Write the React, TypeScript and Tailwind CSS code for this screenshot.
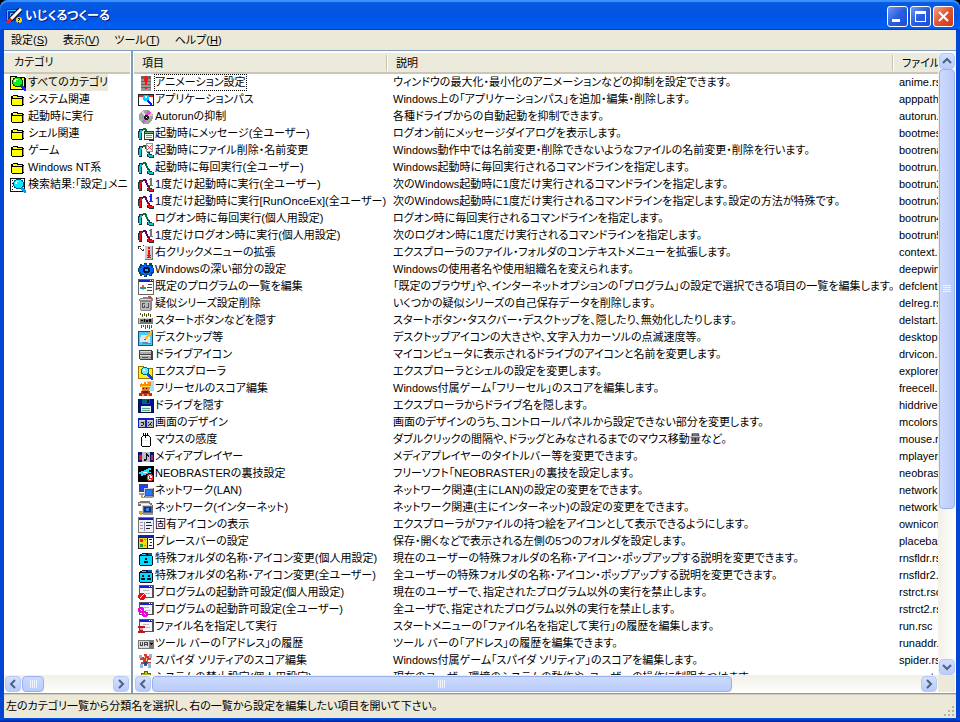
import type { ReactNode } from "react";

function Icon({ children }: { children: ReactNode }) {
  return (
    <svg
      width="16"
      height="16"
      viewBox="0 0 16 16"
      shapeRendering="crispEdges"
      aria-hidden="true"
      className="shrink-0"
    >
      {children}
    </svg>
  );
}

const folder = (
  <Icon>
    <path d="M3 3h5v1h5v1h1v8h-1v1H2v-1H1V4h2z" fill="#000" />
    <path d="M3 4h4v1h5v1H3zM2 7h10v6H2z" fill="#ff0" />
    <path d="M13 6h1v6h-1z" fill="#aa0" />
  </Icon>
);

const folderSearch = (
  <Icon>
    <path d="M0 1h7v1h8v1h1v12H0z" fill="#000" />
    <path d="M1 2h5v1h8v11H1z" fill="#ff0" />
    <path d="M5 2h5v1h2v2h1v5h-2v2H5v-1H3V9H2V5h1V3h2z" fill="#040" />
    <path d="M5 3h5v1h1v1h1v4h-1v1h-1v1H5v-1H4V9H3V5h1V4h1z" fill="#1e2" />
    <path d="M5 4h3v1H6v2H4V5h1z" fill="#fff" />
    <path d="M11 10h2v1h1v1h1v1h1v3h-2v-1h-1v-1h-1v-1h-1z" fill="#22f" />
  </Icon>
);

const resultSearch = (
  <Icon>
    <path d="M0 1h15v14H0z" fill="#111" />
    <path d="M1 2h13v12H1z" fill="#fff" />
    <path d="M2 3h1v1H2zM2 6h1v1H2zM2 9h1v1H2zM2 12h1v1H2z" fill="#000" />
    <path d="M6 2h5v1h2v2h1v5h-2v2H6v-1H4V9H3V5h1V3h2z" fill="#058" />
    <path d="M6 3h5v1h1v1h1v4h-1v1h-1v1H6v-1H5V9H4V5h1V4h1z" fill="#0ef" />
    <path d="M6 4h3v1H7v2H5V5h1z" fill="#fff" />
    <path d="M11 10h2v1h1v1h1v1h1v3h-2v-1h-1v-1h-1v-1h-1z" fill="#09f" />
  </Icon>
);

const animation = (
  <Icon>
    <path d="M3 1h10v15H3z" fill="#999" />
    <path d="M3 1h10v3H3zM3 6h10v1H3zM3 9h10v1H3zM3 12h10v1H3z" fill="#666" />
    <path d="M7 1h2v9H7zM6 3h1v3H6zM9 3h1v3H9zM7 12h2v2H7z" fill="#f11" />
  </Icon>
);

const appPath = (
  <Icon>
    <path d="M0 2h16v12H0z" fill="#222" />
    <path d="M1 3h14v2H1z" fill="#e22" />
    <path d="M1 5h14v8H1z" fill="#fff" />
    <path d="M6 3h4v1h1v4H9v1H6V8H5V4h1z" fill="#0cf" />
    <path d="M7 4h2v2H7z" fill="#dff" />
    <path d="M9 8h2v1h1v1h1v1h1v2h-2v-1h-1v-1h-1v-1H9z" fill="#12e" />
  </Icon>
);

const disc = (
  <Icon>
    <circle cx="8" cy="8" r="7" fill="#a4a4a4" />
    <path d="M8 8L9 1l4 2z" fill="#e4e" />
    <path d="M8 9L3 13l3 2z" fill="#e4e" />
    <path d="M8 8l6-4 1 3z" fill="#dd6" />
    <path d="M8 9l-6 1 1 3z" fill="#7c7" />
    <path d="M8 8L3 4l3-2z" fill="#ddd" />
    <path d="M7 6h3v1h1v3h-1v1H7v-1H6V7h1z" fill="#222" />
    <path d="M8 8h1v1H8z" fill="#fff" />
  </Icon>
);

// running figure shared by the "boot" entries
function Boot({ color, arm, children }: { color: string; arm: string; children?: ReactNode }) {
  return (
    <Icon>
      <path d="M1 3h4v2H4v9H1v-2H0V5h1z" fill="#134" />
      <path d="M2 4h2v3H3v6H1V6h1z" fill={color} />
      <path d="M5 2h3v1h1v3h1v2h1v2H9V8H8V6H7V4H5z" fill={arm} />
      <path d="M10 9h2v2h2v1h2v3h-5v-1H9v-3h1z" fill="#134" />
      <path d="M10 10h1v2h4v2h-4v-1h-1z" fill={color} />
      {children}
    </Icon>
  );
}

const boot = <Boot color="#0cc" arm="#073" />;
const bootOnce = (
  <Boot color="#e11" arm="#606">
    <path d="M12 1h2v7h1v1h-4V8h1V3h-1V2h1z" fill="#777" />
  </Boot>
);
const bootOnceEx = (
  <Boot color="#e11" arm="#606">
    <path d="M12 0h2v7h1v1h-4V7h1V3h-1V2h1z" fill="#22f" />
  </Boot>
);
const bootMessage = (
  <Boot color="#0cc" arm="#073">
    <path d="M6 5h10v9H6z" fill="#242" />
    <path d="M7 6h8v1H7z" fill="#6b6" />
    <path d="M7 8h8v5H7z" fill="#fff" />
    <path d="M8 9h6v1H8zM8 11h6v1H8z" fill="#797" />
  </Boot>
);
const bootRename = (
  <Boot color="#0cc" arm="#073">
    <path d="M8 0h7v9H8z" fill="#999" />
    <path d="M9 1h5v7H9z" fill="#fff" />
    <path d="M9 2h1v1h1v1h1V3h1V2h1v1h-1v1h-1v1h1v1h1v1h-1V6h-1V5h-1v1h-1v1H9V6h1V5h1V4h-1V3H9z" fill="#e44" />
  </Boot>
);

const contextMenu = (
  <Icon>
    <path d="M0 1h3v1H1v2H0zM2 3h1v1h1v1H3V4H2zM5 0h1v1H5zM5 4h1v2H4V5h1z" fill="#333" />
    <path d="M7 1h8v14H7z" fill="#c8c8c8" />
    <path d="M14 1h1v14H7v-1h7z" fill="#777" />
    <path d="M10 2h2v2h-2zM10 5h2v5h1v1h-1v1h1v1H9v-1h1v-1H9v-1h1z" fill="#e11" />
  </Icon>
);

const gear = (
  <Icon>
    <path d="M6 1h3v2h2V1h3v2h1v3h1v5h-1v1h-1v2h-3v-1H9v2H6v-2H4v1H2v-2H1v-2H0V6h1V4h1V2h2v1h2z" fill="#046" />
    <path d="M6 2h2v2h5v2h2v4h-2v3h-3v-1H8v2H6v-2H3v-2H1V6h2V4h3z" fill="#06f" />
    <path d="M6 5h5v1h1v4h-1v1H6v-1H5V6h1z" fill="#013" />
    <path d="M7 7h3v2H7z" fill="#2af" />
  </Icon>
);

const defaultPrograms = (
  <Icon>
    <path d="M0 0h16v16H0z" fill="#666" />
    <path d="M1 3h14v12H1z" fill="#fff" />
    <path d="M1 1h14v2H1z" fill="#12c" />
    <path d="M12 1h1v1h-1zM14 1h1v1h-1z" fill="#fff" />
    <path d="M10 5h4v1h-4zM9 8h5v1H9zM9 11h5v1H9z" fill="#444" />
    <path d="M4 6h2v2H4z" fill="#e62" />
    <path d="M2 8h3v2H2z" fill="#28c" />
    <path d="M5 8h3v2H5z" fill="#2a2" />
    <path d="M4 10h2v1H4z" fill="#dc2" />
  </Icon>
);

const trash = (
  <Icon>
    <path d="M2 2h3V1h7v1h3v3h-1v9h-1v1H3v-1H2V5H1V3h1z" fill="#888" />
    <path d="M2 3h11v1H2z" fill="#ddd" />
    <path d="M3 6h9v8H3z" fill="#bbb" />
    <path d="M4 7h3v1H5v3h1V9h1v3H4zM10 7h1v5H8v-1h2z" fill="#555" />
    <path d="M10 0h3v1h1v2h-3V2h-1z" fill="#b55" />
  </Icon>
);

const hideStart = (
  <Icon>
    <path d="M0 5h15v6H0z" fill="#777" />
    <path d="M1 5h13v1H1zM1 6h1v4H1z" fill="#ccc" />
    <path d="M3 7h2v1H3zM6 6h1v3H6zM8 7h2v2H8zM11 6h2v3h-2z" fill="#000" />
    <path d="M2 0h1v2H2zM4 1h1v3H4zM6 0h1v3H6zM8 1h1v3H8zM10 0h1v3h-1zM12 1h1v3h-1zM3 12h1v3H3zM5 12h1v2H5zM7 12h1v4H7zM9 12h1v3H9zM11 12h1v4h-1zM13 12h1v3h-1z" fill="#551" />
  </Icon>
);

const desktop = (
  <Icon>
    <path d="M0 1h15v15H0z" fill="#157" />
    <path d="M1 2h13v13H1z" fill="#4cf" />
    <path d="M3 5h7v1h2v7H4v-1H2V7h1z" fill="#dde8f0" />
    <path d="M4 12h6v1h3v1H5v-1H4z" fill="#68a" />
    <path d="M12 1h2v2h-1v2h-1v1h-1v1h-1v1H9v1H7V7h1V6h1V5h1V4h1V3h1z" fill="#fb2" />
    <path d="M13 0h2v2h-1V1h-1zM6 9h2v1H6z" fill="#b42" />
  </Icon>
);

const drive = (
  <Icon>
    <path d="M1 3h13v1h1v9H2v-1H1z" fill="#444" />
    <path d="M2 4h11v3H2zM2 8h11v4H2z" fill="#aaa" />
    <path d="M2 4h11v1H2zM2 8h11v1H2z" fill="#ddd" />
    <path d="M4 10h6v1H4z" fill="#555" />
    <path d="M12 10h1v1h-1z" fill="#2c2" />
  </Icon>
);

const explorer = (
  <Icon>
    <path d="M0 2h6v2h9v11H0z" fill="#970" />
    <path d="M1 3h4v2h9v9H1z" fill="#fe2" />
    <path d="M5 3h4v1h2v5H9v2H5v-1H3V5h1V4h1z" fill="#068" />
    <path d="M5 4h4v1h1v4H9v1H5V9H4V5h1z" fill="#6ef" />
    <path d="M5 5h2v2H5z" fill="#fff" />
    <path d="M9 9h2v1h1v1h1v1h1v1h1v3h-2v-1h-1v-1h-1v-1h-1v-1H9z" fill="#14d" />
  </Icon>
);

const freecell = (
  <Icon>
    <path d="M9 0h7v10H9z" fill="#ade" />
    <path d="M3 2h1v1h2V1h2v2h2V1h3v4h-1v3H4V6H2V3h1z" fill="#f80" />
    <path d="M3 5h9v1H3z" fill="#fd3" />
    <path d="M4 6h7v4H4z" fill="#d73" />
    <path d="M5 7h1v1H5zM8 7h1v1H8z" fill="#310" />
    <path d="M3 10h9v2h2v3H1v-3h2z" fill="#c22" />
    <path d="M5 10h5v2H5z" fill="#620" />
    <path d="M4 13h2v2H4zM9 13h2v2H9z" fill="#f92" />
  </Icon>
);

const floppy = (
  <Icon>
    <path d="M0 1h16v14H0z" fill="#014" />
    <path d="M1 2h14v12H1z" fill="#019" />
    <path d="M4 1h8v5H4z" fill="#067" />
    <path d="M9 2h2v3H9z" fill="#013" />
    <path d="M3 8h10v6H3z" fill="#eee" />
    <path d="M4 10h8v1H4zM4 12h8v1H4z" fill="#5a7" />
  </Icon>
);

const screenDesign = (
  <Icon>
    <path d="M0 3h16v10H0z" fill="#12b" />
    <path d="M1 5h6v7H1zM9 5h6v7H9z" fill="#bbb" />
    <path d="M1 5h6v1H1zM9 5h6v1H9z" fill="#ddd" />
    <path d="M3 7h3v3H5v1H3v-1h2V8H3zM10 7h1v1h1v1h1V8h1V7h-1v1h-1v1h1v1h1v1h-1v-1h-2v1h-1v-1h1V9h1V8h-2z" fill="#222" />
  </Icon>
);

const mouse = (
  <Icon>
    <path d="M5 1h1v2h3V1h1v2h1v1h1v1h1v9h-1v1H4v-1H3V5h1V4h1z" fill="#000" />
    <path d="M5 4h6v1h1v9H4V5h1z" fill="#fff" />
    <path d="M7 1h1v5H7z" fill="#000" />
    <path d="M4 8h8v1H4z" fill="#eee" />
  </Icon>
);

const media = (
  <Icon>
    <path d="M0 3h16v10H0z" fill="#116" />
    <path d="M1 6h3v5H1z" fill="#e11" />
    <path d="M13 6h2v5h-2z" fill="#c24" />
    <path d="M4 3h8v10H4z" fill="#bbc" />
    <path d="M8 4h1v1h1v1h1v2h-1V7H9v4H8v1H6v-2h2z" fill="#111" />
  </Icon>
);

const neobraster = (
  <Icon>
    <path d="M0 0h16v16H0z" fill="#000" />
    <path d="M1 6h2V5h3V4h2V3h2V2h3v2h-2v2h2v1h-3v1H8v1H5v1H3V8H1z" fill="#2df" />
    <path d="M5 6h4v1H5z" fill="#fff" />
    <path d="M10 8h4v1h1v5h-1v1h-4v-1H9V9h1z" fill="#e33" />
    <path d="M10 10h1V9h2v1h1v3h-1v1h-2v-1h-1z" fill="#fff" />
    <path d="M11 10h1v2h2v1h-3z" fill="#b11" />
  </Icon>
);

const lan = (
  <Icon>
    <path d="M1 1h9v8H1z" fill="#446" />
    <path d="M2 2h7v5H2z" fill="#14f" />
    <path d="M6 5h10v9H6z" fill="#556" />
    <path d="M6 5h9v1H7v7H6z" fill="#ccd" />
    <path d="M8 7h6v5H8z" fill="#27f" />
    <path d="M1 10h5v2H1zM7 13h8v2H7z" fill="#99a" />
    <path d="M3 12h2v2h3v1H3z" fill="#ca2" />
  </Icon>
);

const internet = (
  <Icon>
    <path d="M0 2h2V1h10v2h2v2h-2V4H3v2H0z" fill="#777" />
    <path d="M1 3h10v1H1z" fill="#ddd" />
    <path d="M4 5h11v9H4z" fill="#667" />
    <path d="M4 5h10v1H5v7H4z" fill="#ccc" />
    <path d="M6 7h7v5H6z" fill="#039" />
    <path d="M8 8h3v3H8z" fill="#48d" />
    <path d="M1 11h3v3H1zM5 13h10v2H5z" fill="#999" />
    <path d="M2 12h2v3H2z" fill="#da2" />
  </Icon>
);

const ownIcon = (
  <Icon>
    <path d="M0 0h16v16H0z" fill="#777" />
    <path d="M1 1h14v2H1z" fill="#12b" />
    <path d="M1 3h14v12H1z" fill="#eef" />
    <path d="M2 5h3v1H2zM2 8h3v1H2zM2 11h3v1H2z" fill="#999" />
    <path d="M6 5h1v9H6z" fill="#88a" />
    <path d="M8 5h5v1H8zM8 8h6v1H8zM8 11h4v1H8z" fill="#222" />
  </Icon>
);

const placesBar = (
  <Icon>
    <path d="M0 1h16v14H0z" fill="#222" />
    <path d="M0 1h16v2H0z" fill="#12b" />
    <path d="M1 4h8v10H1z" fill="#ed1" />
    <path d="M2 5h3v3H2z" fill="#e22" />
    <path d="M2 10h3v3H2z" fill="#292" />
    <path d="M6 5h2v1H6zM6 11h2v1H6z" fill="#f62" />
    <path d="M10 4h5v10h-5z" fill="#fff" />
    <path d="M11 5h3v1h-3zM12 8h2v1h-2zM11 11h3v1h-3z" fill="#222" />
  </Icon>
);

function SpecialFolder({ children }: { children: ReactNode }) {
  return (
    <Icon>
      <path d="M2 3h2V2h6v2h4v1h1v9h-1v1H2v-1H1V4h1z" fill="#013" />
      <path d="M4 3h4v1H3zM2 5h12v9H2z" fill="#0df" />
      <path d="M10 2h4v2h-4z" fill="#05a" />
      {children}
    </Icon>
  );
}

const specialUser = (
  <SpecialFolder>
    <path d="M7 7h2v2H7zM6 10h4v2H6z" fill="#012" />
  </SpecialFolder>
);
const specialAll = (
  <SpecialFolder>
    <path d="M4 7h2v2H4zM3 10h4v2H3zM10 7h2v2h-2zM9 10h4v2H9z" fill="#012" />
  </SpecialFolder>
);

function SmallWindow({ children }: { children: ReactNode }) {
  return (
    <Icon>
      <path d="M1 0h15v13H1z" fill="#555" />
      <path d="M2 1h12v2H2z" fill="#12c" />
      <path d="M11 1h1v1h-1zM13 1h1v1h-1z" fill="#fff" />
      <path d="M2 3h12v9H2z" fill="#f4f4ff" />
      <path d="M5 5h6v1H5zM7 8h5v1H7z" fill="#bbb" />
      {children}
    </Icon>
  );
}

const restrictUser = (
  <SmallWindow>
    <path d="M2 8h4v1h1v1h1v3H7v1H6v1H2v-1H1v-1H0v-3h1V9h1z" fill="#d11" />
    <path d="M5 9h1v1H5v1H4v1H3v1H2v-1h1v-1h1v-1h1z" fill="#fff" />
  </SmallWindow>
);
const restrictAll = (
  <SmallWindow>
    <path d="M1 5h4v1h1v3h2v1h2v4H9v1H5v-1H4v-3H1v-1H0V6h1z" fill="#e0d" />
    <path d="M2 7h1v1h1v1H3V8H2zM6 11h1v1h1v1H7v-1H6z" fill="#fff" />
  </SmallWindow>
);
const runFile = (
  <SmallWindow>
    <path d="M0 7h7v2H5v3h2v2H0v-2h2V9H0z" fill="#a22" />
    <path d="M2 9h3v2H2z" fill="#f88" />
  </SmallWindow>
);

const addressBar = (
  <Icon>
    <path d="M0 4h16v9H0z" fill="#777" />
    <path d="M1 5h10v7H1z" fill="#ddd" />
    <path d="M2 6h1v4H2zM4 6h1v4H4zM3 9h1v1H3zM6 7h1v3H6zM6 6h3v1H6zM9 6h1v4H9zM7 8h2v1H7z" fill="#444" />
    <path d="M12 7h3v1h-1v1h-1V8h-1z" fill="#000" />
  </Icon>
);

const spider = (
  <Icon>
    <path d="M1 2h3v3H1zM11 1h3v4h-3zM2 11h3v4H2zM10 10h3v5h-3z" fill="#8bd" />
    <path d="M6 1h3v2h2v4h-1v4H9v2H6v-2H5V7H4V4h2z" fill="#d33" />
    <path d="M2 5h3v2H2zM11 5h2v2h-2zM3 9h2v2H3zM10 9h3v1h-3z" fill="#b44" />
    <path d="M6 3h1v2H6zM8 5h1v3H8z" fill="#fc9" />
    <path d="M6 9h3v3H6z" fill="#347" />
  </Icon>
);

const systemLock = (
  <Icon>
    <path d="M6 1h4v2h3v2h1v9H2V5h1V3h3z" fill="#660" />
    <path d="M7 2h2v2h3v2H4V4h3z" fill="#bb2" />
  </Icon>
);

const categories = [
  { icon: folderSearch, name: "すべてのカテゴリ" },
  { icon: folder, name: "システム関連" },
  { icon: folder, name: "起動時に実行" },
  { icon: folder, name: "シェル関連" },
  { icon: folder, name: "ゲーム" },
  { icon: folder, name: "Windows NT系" },
  { icon: resultSearch, name: "検索結果:「設定」メニ" },
];

const items = [
  { icon: animation, name: "アニメーション設定", text: "ウィンドウの最大化・最小化のアニメーションなどの抑制を設定できます。", file: "anime.rsc" },
  { icon: appPath, name: "アプリケーションパス", text: "Windows上の「アプリケーションパス」を追加・編集・削除します。", file: "apppath.rsc" },
  { icon: disc, name: "Autorunの抑制", text: "各種ドライブからの自動起動を抑制できます。", file: "autorun.rsc" },
  { icon: bootMessage, name: "起動時にメッセージ(全ユーザー)", text: "ログオン前にメッセージダイアログを表示します。", file: "bootmes.rsc" },
  { icon: bootRename, name: "起動時にファイル削除・名前変更", text: "Windows動作中では名前変更・削除できないようなファイルの名前変更・削除を行います。", file: "bootrename.rsc" },
  { icon: boot, name: "起動時に毎回実行(全ユーザー)", text: "Windows起動時に毎回実行されるコマンドラインを指定します。", file: "bootrun.rsc" },
  { icon: bootOnce, name: "1度だけ起動時に実行(全ユーザー)", text: "次のWindows起動時に1度だけ実行されるコマンドラインを指定します。", file: "bootrun2.rsc" },
  { icon: bootOnceEx, name: "1度だけ起動時に実行[RunOnceEx](全ユーザー)", text: "次のWindows起動時に1度だけ実行されるコマンドラインを指定します。設定の方法が特殊です。", file: "bootrun3.rsc" },
  { icon: boot, name: "ログオン時に毎回実行(個人用設定)", text: "ログオン時に毎回実行されるコマンドラインを指定します。", file: "bootrun4.rsc" },
  { icon: bootOnce, name: "1度だけログオン時に実行(個人用設定)", text: "次のログオン時に1度だけ実行されるコマンドラインを指定します。", file: "bootrun5.rsc" },
  { icon: contextMenu, name: "右クリックメニューの拡張", text: "エクスプローラのファイル・フォルダのコンテキストメニューを拡張します。", file: "context.rsc" },
  { icon: gear, name: "Windowsの深い部分の設定", text: "Windowsの使用者名や使用組織名を変えられます。", file: "deepwin.rsc" },
  { icon: defaultPrograms, name: "既定のプログラムの一覧を編集", text: "「既定のブラウザ」や、インターネットオプションの「プログラム」の設定で選択できる項目の一覧を編集します。", file: "defclent.rsc" },
  { icon: trash, name: "疑似シリーズ設定削除", text: "いくつかの疑似シリーズの自己保存データを削除します。", file: "delreg.rsc" },
  { icon: hideStart, name: "スタートボタンなどを隠す", text: "スタートボタン・タスクバー・デスクトップを、隠したり、無効化したりします。", file: "delstart.rsc" },
  { icon: desktop, name: "デスクトップ等", text: "デスクトップアイコンの大きさや、文字入力カーソルの点滅速度等。", file: "desktop.rsc" },
  { icon: drive, name: "ドライブアイコン", text: "マイコンピュータに表示されるドライブのアイコンと名前を変更します。", file: "drvicon.rsc" },
  { icon: explorer, name: "エクスプローラ", text: "エクスプローラとシェルの設定を変更します。", file: "explorer.rsc" },
  { icon: freecell, name: "フリーセルのスコア編集", text: "Windows付属ゲーム「フリーセル」のスコアを編集します。", file: "freecell.rsc" },
  { icon: floppy, name: "ドライブを隠す", text: "エクスプローラからドライブ名を隠します。", file: "hiddrive.rsc" },
  { icon: screenDesign, name: "画面のデザイン", text: "画面のデザインのうち、コントロールパネルから設定できない部分を変更します。", file: "mcolors.rsc" },
  { icon: mouse, name: "マウスの感度", text: "ダブルクリックの間隔や、ドラッグとみなされるまでのマウス移動量など。", file: "mouse.rsc" },
  { icon: media, name: "メディアプレイヤー", text: "メディアプレイヤーのタイトルバー等を変更できます。", file: "mplayer.rsc" },
  { icon: neobraster, name: "NEOBRASTERの裏技設定", text: "フリーソフト「NEOBRASTER」の裏技を設定します。", file: "neobras.rsc" },
  { icon: lan, name: "ネットワーク(LAN)", text: "ネットワーク関連(主にLAN)の設定の変更をできます。", file: "network.rsc" },
  { icon: internet, name: "ネットワーク(インターネット)", text: "ネットワーク関連(主にインターネット)の設定の変更をできます。", file: "network2.rsc" },
  { icon: ownIcon, name: "固有アイコンの表示", text: "エクスプローラがファイルの持つ絵をアイコンとして表示できるようにします。", file: "ownicon.rsc" },
  { icon: placesBar, name: "プレースバーの設定", text: "保存・開くなどで表示される左側の5つのフォルダを設定します。", file: "placebar.rsc" },
  { icon: specialUser, name: "特殊フォルダの名称・アイコン変更(個人用設定)", text: "現在のユーザーの特殊フォルダの名称・アイコン・ポップアップする説明を変更できます。", file: "rnsfldr.rsc" },
  { icon: specialAll, name: "特殊フォルダの名称・アイコン変更(全ユーザー)", text: "全ユーザーの特殊フォルダの名称・アイコン・ポップアップする説明を変更できます。", file: "rnsfldr2.rsc" },
  { icon: restrictUser, name: "プログラムの起動許可設定(個人用設定)", text: "現在のユーザーで、指定されたプログラム以外の実行を禁止します。", file: "rstrct.rsc" },
  { icon: restrictAll, name: "プログラムの起動許可設定(全ユーザー)", text: "全ユーザで、指定されたプログラム以外の実行を禁止します。", file: "rstrct2.rsc" },
  { icon: runFile, name: "ファイル名を指定して実行", text: "スタートメニューの「ファイル名を指定して実行」の履歴を編集します。", file: "run.rsc" },
  { icon: addressBar, name: "ツール バーの「アドレス」の履歴", text: "ツール バーの「アドレス」の履歴を編集できます。", file: "runaddr.rsc" },
  { icon: spider, name: "スパイダ ソリティアのスコア編集", text: "Windows付属ゲーム「スパイダ ソリティア」のスコアを編集します。", file: "spider.rsc" },
  { icon: systemLock, name: "システムの禁止設定(個人用設定)", text: "現在のユーザー環境のシステムの動作や、ユーザーの操作に制限をつけます。", file: "sysrest.rsc" },
];

const menus = [
  { label: "設定", key: "S" },
  { label: "表示", key: "V" },
  { label: "ツール", key: "T" },
  { label: "ヘルプ", key: "H" },
];

const arrows = {
  up: "M4 10l4-4 4 4",
  down: "M4 6l4 4 4-4",
  left: "M10 4L6 8l4 4",
  right: "M6 4l4 4-4 4",
};

function ScrollButton({ dir, label }: { dir: keyof typeof arrows; label: string }) {
  return (
    <button
      aria-label={label}
      className="flex size-4 shrink-0 items-center justify-center rounded-sm border border-[#b4c8f6] bg-linear-to-b from-[#d3e0fe] to-[#b9cbf8]"
    >
      <svg width="16" height="16" viewBox="0 0 16 16" className="shrink-0" aria-hidden="true">
        <path d={arrows[dir]} fill="none" stroke="#4d6185" strokeWidth="2" />
      </svg>
    </button>
  );
}

function HScroll({ thumb }: { thumb: string }) {
  return (
    <div className="flex h-[17px] shrink-0 items-center bg-linear-to-b from-[#f1f0e9] to-[#fefefb] px-px">
      <ScrollButton dir="left" label="左へスクロール" />
      <div className="min-w-0 flex-1 px-px">
        <div className={"flex h-4 items-center justify-center rounded-sm border border-[#98b0ee] bg-linear-to-b from-[#cbdafd] to-[#b9cbf8] " + thumb}>
          <span className="flex gap-px">
            <i className="h-2 w-px bg-[#eef4fe]" />
            <i className="h-2 w-px bg-[#eef4fe]" />
            <i className="h-2 w-px bg-[#eef4fe]" />
            <i className="h-2 w-px bg-[#eef4fe]" />
          </span>
        </div>
      </div>
      <ScrollButton dir="right" label="右へスクロール" />
    </div>
  );
}

function VScroll() {
  return (
    <div className="flex w-[17px] shrink-0 flex-col items-center bg-linear-to-r from-[#f1f0e9] to-[#fefefb]">
      <ScrollButton dir="up" label="上へスクロール" />
      <div className="min-h-0 flex-1">
        <div className="flex h-[74.5%] w-4 items-center justify-center rounded-sm border border-[#98b0ee] bg-linear-to-r from-[#cbdafd] to-[#b9cbf8]">
          <span className="flex flex-col gap-px">
            <i className="h-px w-2 bg-[#eef4fe]" />
            <i className="h-px w-2 bg-[#eef4fe]" />
            <i className="h-px w-2 bg-[#eef4fe]" />
            <i className="h-px w-2 bg-[#eef4fe]" />
          </span>
        </div>
      </div>
      <ScrollButton dir="down" label="下へスクロール" />
    </div>
  );
}

function TitleBar() {
  return (
    <header className="flex h-[30px] shrink-0 items-center gap-[3px] rounded-t-lg bg-linear-to-b from-[#0a5be0] via-[#0054e3] to-[#0060f6] px-[6px] pt-[2px] shadow-[inset_0_2px_1px_#3a93ff,inset_0_-1px_1px_#0040c0]">
      <svg width="16" height="16" viewBox="0 0 16 16" aria-hidden="true">
        <path d="M0 1h13v12H0z" fill="#0a2fc8" />
        <path d="M1 2h10v1H2v9H1zM4 5h5v1H5v4H4z" fill="#2cf" />
        <path d="M15 1L4 12" stroke="#111" strokeWidth="5" />
        <path d="M15 1L5 11" stroke="#fff" strokeWidth="3" />
        <path d="M5 11l-4 4" stroke="#e22" strokeWidth="3" />
        <circle cx="13" cy="12" r="3" fill="#fd1" />
        <path d="M12 10h2v2h-1v1h-1v-1h1v-1h-1zM12 14h1v1h-1z" fill="#220" />
      </svg>
      <h1 className="flex-1 text-[12px] font-bold text-white [text-shadow:1px_1px_#0a1883]">いじくるつくーる</h1>
      <div className="flex gap-[2px]">
        <button aria-label="最小化" className="flex size-[21px] items-end rounded-[3px] border border-white bg-linear-to-br from-[#6f97f3] via-[#2a5ce0] to-[#1c4fd8] p-1">
          <span className="h-[3px] w-2 bg-white" />
        </button>
        <button aria-label="最大化" className="flex size-[21px] items-center justify-center rounded-[3px] border border-white bg-linear-to-br from-[#6f97f3] via-[#2a5ce0] to-[#1c4fd8]">
          <span className="h-[11px] w-[11px] border border-t-[3px] border-white" />
        </button>
        <button aria-label="閉じる" className="flex size-[21px] items-center justify-center rounded-[3px] border border-white bg-linear-to-br from-[#f0a088] via-[#e0532f] to-[#cc3a10]">
          <svg width="13" height="13" viewBox="0 0 13 13" className="shrink-0" aria-hidden="true">
            <path d="M2 2l9 9M11 2l-9 9" stroke="#fff" strokeWidth="2" />
          </svg>
        </button>
      </div>
    </header>
  );
}

const headCell =
  "h-[21px] border-b-2 border-[#cbc7b8] bg-[#ebeadb] p-0 text-left font-normal whitespace-nowrap";

export default function App() {
  return (
    <div className="h-screen overflow-hidden bg-black font-['Liberation_Sans','Noto_Sans_CJK_JP',sans-serif] text-[11px] leading-[17px] text-black [font-feature-settings:'palt']">
      <div className="flex h-full flex-col rounded-t-lg bg-[#0046d5]">
        <TitleBar />

        <div className="flex min-h-0 flex-1 flex-col px-1">
          <nav className="flex h-5 shrink-0 items-center gap-[15px] bg-[#ece9d8] px-[7px]">
            {menus.map((m) => (
              <button key={m.key}>
                {m.label}(<u>{m.key}</u>)
              </button>
            ))}
          </nav>

          <main className="flex min-h-0 flex-1 gap-[2px] border-y border-[#7f9db9] bg-[#7f9db9]">
            <section className="flex w-[127px] shrink-0 flex-col border-t-2 border-r border-b border-white bg-white">
              <div className="min-h-0 flex-1 overflow-hidden">
                <table className="w-full table-fixed border-separate border-spacing-0">
                  <thead>
                    <tr>
                      <th className={headCell + " pl-[10px]"}>カテゴリ</th>
                    </tr>
                  </thead>
                  <tbody>
                    {categories.map((c, i) => (
                      <tr key={c.name}>
                        <td className="h-[17px] overflow-hidden p-0">
                          <div className="flex h-[17px] items-center pl-[6px] whitespace-nowrap">
                            {c.icon}
                            <span className={i === 0 ? "bg-[#ece9d8] pl-[2px]" : "pl-[2px]"}>{c.name}</span>
                          </div>
                        </td>
                      </tr>
                    ))}
                  </tbody>
                </table>
              </div>
              <HScroll thumb="w-[22px]" />
            </section>

            <section className="flex min-w-0 flex-1 flex-col border border-t-2 border-white bg-white">
              <div className="flex min-h-0 flex-1">
                <div className="min-w-0 flex-1 overflow-hidden">
                  <table className="w-[1040px] table-fixed border-separate border-spacing-0">
                    <colgroup>
                      <col className="w-[253px]" />
                      <col className="w-[506px]" />
                      <col />
                    </colgroup>
                    <thead>
                      <tr>
                        <th className={headCell}>
                          <div className="h-4 border-r border-[#c5c2b2] pl-2 leading-4">項目</div>
                        </th>
                        <th className={headCell}>
                          <div className="h-4 border-r border-l border-r-[#c5c2b2] border-l-white pl-2 leading-4">説明</div>
                        </th>
                        <th className={headCell}>
                          <div className="h-4 border-l border-white pl-2 leading-4">ファイル</div>
                        </th>
                      </tr>
                    </thead>
                    <tbody>
                      {items.map((item, i) => (
                        <tr key={item.name} className="whitespace-nowrap">
                          <td className="h-[17px] overflow-hidden p-0">
                            <div className="flex h-[17px] items-center pl-1">
                              {item.icon}
                              <span className={i === 0 ? "pr-px pl-px outline outline-dotted -outline-offset-1 outline-black" : "pl-px"}>
                                {item.name}
                              </span>
                            </div>
                          </td>
                          <td className="h-[17px] overflow-hidden p-0">
                            <div className="h-[17px] pl-[6px]">{item.text}</div>
                          </td>
                          <td className="h-[17px] overflow-hidden p-0">
                            <div className="h-[17px] pl-[6px]">{item.file}</div>
                          </td>
                        </tr>
                      ))}
                    </tbody>
                  </table>
                </div>
                <VScroll />
              </div>
              <div className="flex">
                <div className="min-w-0 flex-1">
                  <HScroll thumb="w-[75.5%]" />
                </div>
                <div className="w-[17px] bg-[#ece9d8]" />
              </div>
            </section>
          </main>

          <footer className="flex h-6 shrink-0 items-center justify-between border-t border-[#d0cdbf] bg-[#ece9d8] pl-[2px]">
            <p>左のカテゴリ一覧から分類名を選択し、右の一覧から設定を編集したい項目を開いて下さい。</p>
            <svg width="13" height="13" viewBox="0 0 13 13" className="self-end" aria-hidden="true">
              <path d="M9 1h2v2H9zM5 5h2v2H5zM9 5h2v2H9zM1 9h2v2H1zM5 9h2v2H5zM9 9h2v2H9z" fill="#b8b4a3" />
            </svg>
          </footer>
        </div>
        <div className="h-1 shrink-0 bg-linear-to-b from-[#0054e3] to-[#001ea0]" />
      </div>
    </div>
  );
}
